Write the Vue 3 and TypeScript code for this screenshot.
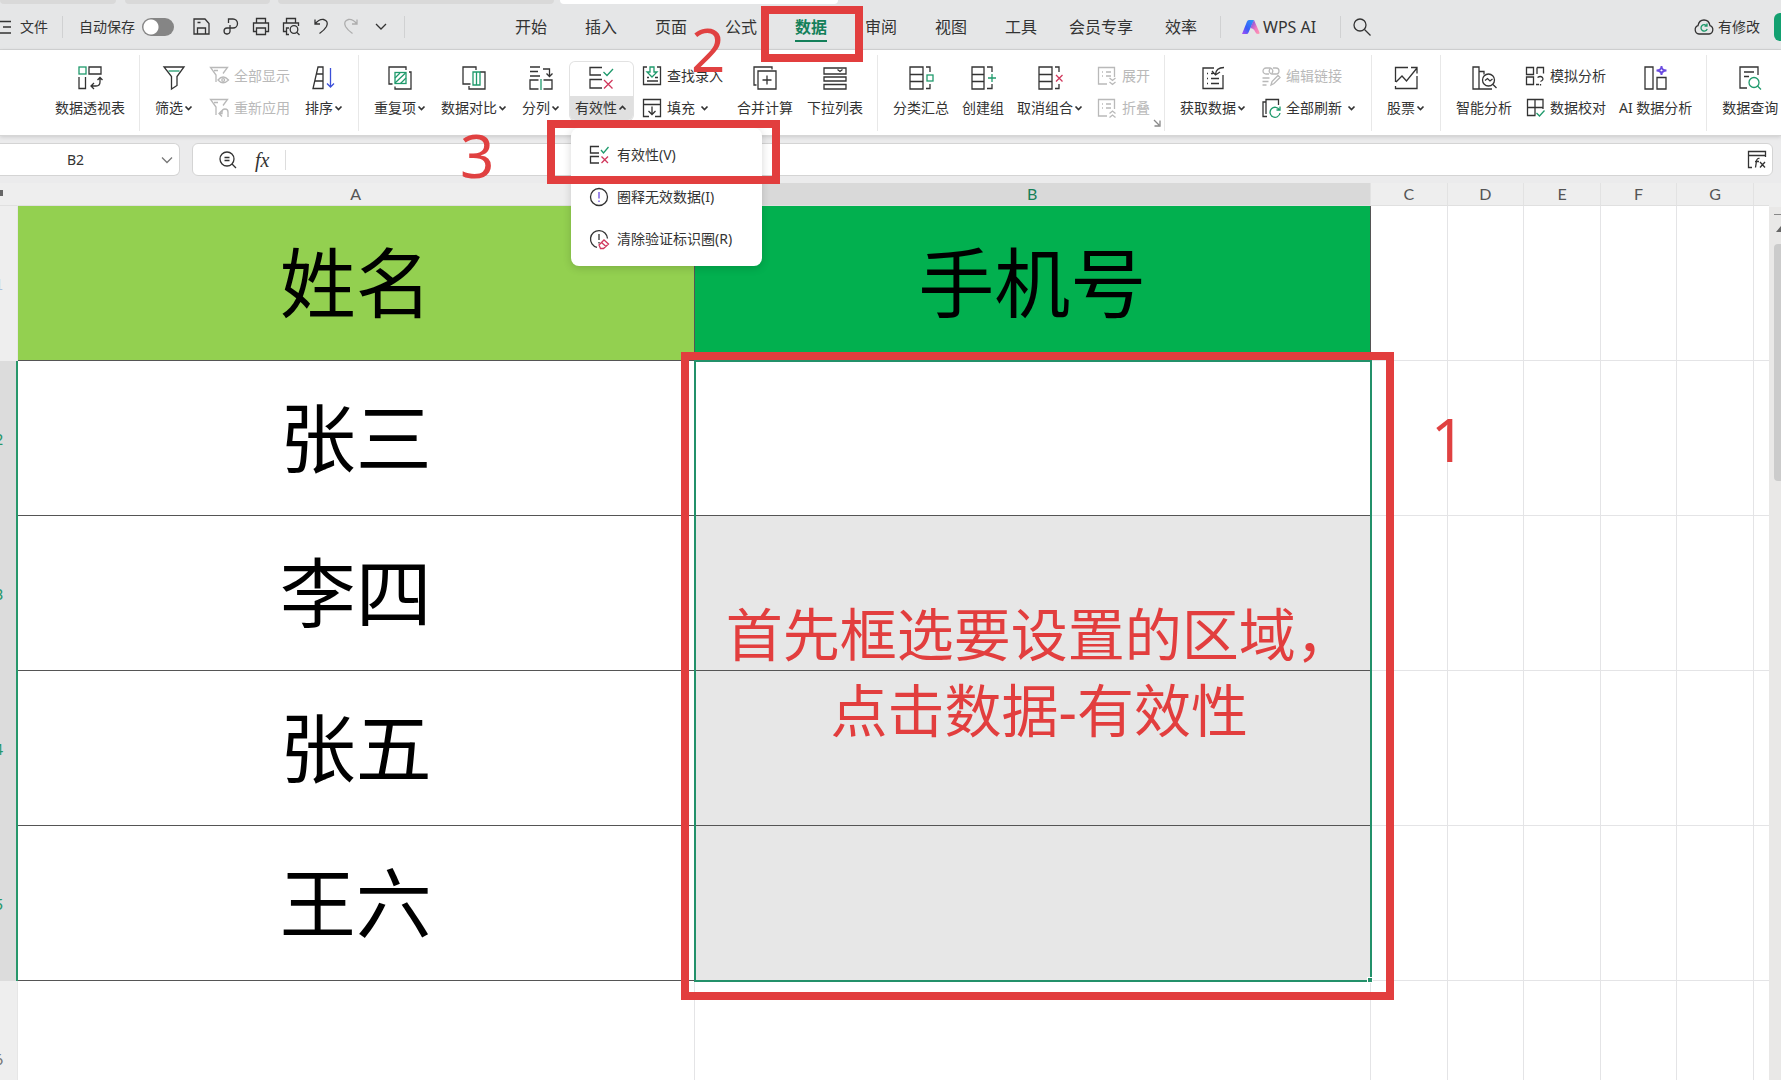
<script setup lang="ts">
import { ref } from 'vue'

type Item = { label: string; icon: string; caret?: boolean; disabled?: boolean; open?: boolean }
type Entry = Item | Item[]
type Group = { id: string; entries: Entry[]; launcher?: boolean }

const G = '#1f9a6c'
const R = '#d0375c'
const V = '#6a4be0'

const icons: Record<string, string> = {
  pivot: `<rect x="1" y="1" width="7" height="7" stroke="${G}"/><path d="M11 1h12v7H11zM1 11v11.500h6.500V11M22 12v4q0 4-4 4h-5M19.500 14l2.500-2.500 2.500 2.500M16 17l-3 3 3 3"/>`,
  filter: `<path d="M2 1h20l-7 9.500v9L9.500 23V10.500z"/><path d="M6.500 5h11" stroke="${G}"/>`,
  showall: `<path d="M7 16V9L1.500 1.500h17L14 7.500M5 4.500h4"/><path d="M9 14q5-6 10.500 0-5.500 5.500-10.500 0z"/><circle cx="14.200" cy="14" r="1.400"/>`,
  reapply: `<path d="M7 17V9L1.500 1.500h17L14 7.500M5 4.500h4M13 12.500l-3 3 3 3M10 15.500h3V14q0-3 3-3t3 3v5"/>`,
  sort: `<path d="M6 1h5v21.500H1zM4.500 8H11M3 15h8"/><path d="M18.500 2v19M15 17.500l3.500 3.500 3.500-3.500" stroke="#3b4fd8"/>`,
  dup: `<path d="M4.500 18H1V1h17v3M21 6h2v17H7v-2.500"/><rect x="7" y="6.500" width="11" height="11" stroke="${G}"/><path d="M7 12l5-5M7 17L17.500 7M12.500 17.500L18 12" stroke="${G}"/>`,
  compare: `<path d="M8.500 18H1V1h13v3M18 6h5v17H7v-3"/><path d="M11 6h7v13h-7zM14.500 6v13" stroke="${G}"/>`,
  split: `<path d="M1 1h10M1 5.500h8M1 10h10M14 3h6.500v7M17.500 7.500l3 3 3-3M9.500 14H1v9h8.500M14.500 14H23v9h-8.500"/><path d="M12 13v11" stroke="${G}"/>`,
  valid: `<path d="M13 1.500H1V9h11M13 13.500H1V22h12"/><path d="M14.500 6l3.500 3.500L24 3" stroke="${G}"/><path d="M15 14l8.500 8.500M23.500 14L15 22.500" stroke="${R}"/>`,
  lookup: `<path d="M5 1H1.500v17.500h17V1H15M5 11.500h2M5 15h11M13 11.500h3"/><path d="M8 1h4v5h3l-5 5-5-5h3z" stroke="${G}"/>`,
  fill: `<path d="M7 18.500H1.500V6.500h17v12H13M1.500 6.500v-5h17v5M10 8.500v8M6.500 13l3.500 3.500 3.500-3.500"/>`,
  merge: `<path d="M3.500 19H1V1h18v2.500"/><path d="M5 5h18v18H5zM14 9.500v9M9.500 14h9"/>`,
  list: `<path d="M1 2h22v6H1zM1 11h22v4H1zM1 18.500h22v4.500H1zM14.500 3.500l2.500 2 2.500-2"/>`,
  subtotal: `<path d="M1 1h13v22H1zM1 8.500h13M1 15.500h13M17 1h4v5M21 18v4.500h-4"/><rect x="18" y="9" width="6" height="6" stroke="${G}"/>`,
  group: `<path d="M1 1h12v22H1zM1 8.500h12M1 15.500h12M16 1h5v5M21 18v4.500h-5"/><path d="M17 12h8M21 8v8" stroke="${G}"/>`,
  ungroup: `<path d="M1 1h13v22H1zM1 8.500h13M1 15.500h13M17 1h4v5M21 18v4.500h-4"/><path d="M18 9l6.500 6.500M24.500 9L18 15.500" stroke="${R}"/>`,
  expand: `<path d="M10 18H1.500V1.500h16V11M5 6h1M9 6h5M5 10h1M9 10h5M12.500 12l3 2.500 3-2.500M12.500 16l3 2.500 3-2.500"/>`,
  collapse: `<path d="M10 18H1.500V1.500h16V11M5 6h1M9 6h5M5 10h1M9 10h5M12.500 15.500l3-2.500 3 2.500M12.500 19.500l3-2.500 3 2.500"/>`,
  fetch: `<path d="M13 2H2v20.500h20V9M6 7.500h1M6 12.500h1M6 17.500h1M10 12.500h8M10 17.500h8M10 7.500h2M23 1.500q-8 0-8.500 7M11 5l3.500 4 4.500-3"/>`,
  link: `<path d="M8 8H5a3 3 0 0 1 0-6h4a3 3 0 0 1 2 5M12 2h3a3 3 0 0 1 0 6h-4a3 3 0 0 1-2-5M1.500 12h7M1.500 15.500h6M1.500 19h4M10 19l1-3.500 6-6 2 2-6 6z"/>`,
  refresh: `<path d="M5 16V1.500h12.500V7M5 4H2v14.500h4"/><path d="M18.500 12a5 5 0 1 0 .500 3M19 8.500V12h-3.500" stroke="${G}"/>`,
  stock: `<path d="M14 1.500H1.500V16M23 10v12.500H1.500V20M2 16l6-6 4.500 5L23 2M17 1.500h6v6"/>`,
  smart: `<path d="M1 1h6v22H1zM7 5.500h5v3M7 23h13"/><circle cx="16.500" cy="14" r="6"/><path d="M21 18.500l3.500 3.500M13 14.500l2.500-2 2.500 2.500 2.500-2"/>`,
  sim: `<path d="M1.500 1.500h7v7h-7zM1.500 11h7v7.500h-7zM12 1.500h6.500v6M12 1.500V8M11 18.500h3M12.500 11.500q3-2 5 0 1.500 2.500-2 4M15.500 18v1.500"/>`,
  check: `<path d="M10.500 17.500h-8v-16h15.500V11M2.500 9.500H18M10 1.500v16"/><path d="M11.500 15l3 3 5-5.500" stroke="${G}"/>`,
  ai: `<path d="M2 1h8v22H2zM14 11.500h9V23h-9z"/><path d="M18.500 0q0 4.500 5 4.500-5 0-5 4.500 0-4.500-5-4.500 5 0 5-4.500z" stroke="${V}" stroke-width="1.800"/>`,
  query: `<path d="M9 22H2V1h18v8M6 6h10M6 10.500h5"/><circle cx="16" cy="16.500" r="5" stroke="${G}"/><path d="M19.500 20l3.500 3.500" stroke="${G}"/>`,
  warn: `<circle cx="10" cy="10" r="8.500"/><path d="M10 5v6.500M10 13.500v1.500" stroke="${V}"/>`,
  erase: `<path d="M8 18.300A8.500 8.500 0 1 1 18.500 9.500M10 5v6M10 13v1.500"/><path d="M10 16l5-5 4.500 4-5 4.500h-3zM12.500 13.500l4.500 4" stroke="${R}"/>`,
  optValid: `<path d="M10 1.500H1.500V8H10M10 11.500H1.500V18H10"/><path d="M12 5l2.500 3L19.500 2" stroke="${G}"/><path d="M12.500 11.500l6.500 6.500M19 11.500L12.500 18" stroke="${R}"/>`,
  save: `<path d="M2 2h11l4 4.500V17H2zM5.500 17v-6h8v6M5.500 5.500h3"/>`,
  share: `<path d="M6.500 6V2H11a4.300 4.300 0 0 1 0 9H5a3 3 0 1 0 3 3.500V8"/>`,
  print: `<path d="M4.500 6V1.500h9V6M4.500 14.500h-3V6h15v8.500h-3M4.500 11h9v6.500h-9z"/>`,
  preview: `<path d="M4.500 6V1.500h9V6M4.500 14.500h-3V6h15v3M7 17.500H4.500V11H7"/><circle cx="12" cy="12.500" r="3.800"/><path d="M15 15.500l2.500 2.500"/>`,
  undo: `<path d="M3 2.500V7h5M3 7q4-5 8.500-4.500Q17 4 14.500 9.500 12.500 13 7.500 16.500"/>`,
  redo: `<path d="M15 2.500V7h-5M15 7q-4-5-8.500-4.500Q1 4 3.500 9.500 5.500 13 10.500 16.500"/>`,
  more: `<path d="M4 7l5 5 5-5"/>`,
}

const groups: Group[] = [
  { id: 'pivot', entries: [{ label: '数据透视表', icon: 'pivot' }] },
  {
    id: 'filter',
    entries: [
      { label: '筛选', icon: 'filter', caret: true },
      [
        { label: '全部显示', icon: 'showall', disabled: true },
        { label: '重新应用', icon: 'reapply', disabled: true },
      ],
      { label: '排序', icon: 'sort', caret: true },
    ],
  },
  {
    id: 'tools',
    entries: [
      { label: '重复项', icon: 'dup', caret: true },
      { label: '数据对比', icon: 'compare', caret: true },
      { label: '分列', icon: 'split', caret: true },
      { label: '有效性', icon: 'valid', caret: true, open: true },
      [
        { label: '查找录入', icon: 'lookup' },
        { label: '填充', icon: 'fill', caret: true },
      ],
      { label: '合并计算', icon: 'merge' },
      { label: '下拉列表', icon: 'list' },
    ],
  },
  {
    id: 'outline',
    launcher: true,
    entries: [
      { label: '分类汇总', icon: 'subtotal' },
      { label: '创建组', icon: 'group' },
      { label: '取消组合', icon: 'ungroup', caret: true },
      [
        { label: '展开', icon: 'expand', disabled: true },
        { label: '折叠', icon: 'collapse', disabled: true },
      ],
    ],
  },
  {
    id: 'source',
    entries: [
      { label: '获取数据', icon: 'fetch', caret: true },
      [
        { label: '编辑链接', icon: 'link', disabled: true },
        { label: '全部刷新', icon: 'refresh', caret: true },
      ],
    ],
  },
  { id: 'stock', entries: [{ label: '股票', icon: 'stock', caret: true }] },
  {
    id: 'analysis',
    entries: [
      { label: '智能分析', icon: 'smart' },
      [
        { label: '模拟分析', icon: 'sim' },
        { label: '数据校对', icon: 'check' },
      ],
      { label: 'AI 数据分析', icon: 'ai' },
    ],
  },
  { id: 'query', entries: [{ label: '数据查询', icon: 'query' }] },
]

const quick = ['save', 'share', 'print', 'preview', 'undo', 'redo', 'more']
const quickNames: Record<string, string> = {
  save: '保存', share: '输出', print: '打印', preview: '打印预览', undo: '撤销', redo: '恢复', more: '更多',
}
const tabs = ['开始', '插入', '页面', '公式', '数据', '审阅', '视图', '工具', '会员专享', '效率']
const active = ref('数据')
const autosave = ref(false)
const cellName = ref('B2')
const formula = ref('')

const menu = [
  { label: '有效性(V)', icon: 'optValid' },
  { label: '圈释无效数据(I)', icon: 'warn' },
  { label: '清除验证标识圈(R)', icon: 'erase' },
]

const columns = ['A', 'B', 'C', 'D', 'E', 'F', 'G', '']
const rows = [
  { n: 1, a: '姓名', b: '手机号' },
  { n: 2, a: '张三', b: '' },
  { n: 3, a: '李四', b: '' },
  { n: 4, a: '张五', b: '' },
  { n: 5, a: '王六', b: '' },
  { n: 6, a: '', b: '' },
]
</script>

<template>
  <div class="app">
    <div class="doc-tabs">
      <i class="doc first"></i><i class="doc second"></i><i class="doc third"></i><i class="doc current"></i>
    </div>

    <header class="menubar">
      <div class="quick">
        <button class="file">
          <svg class="burger" viewBox="0 0 14 18"><path d="M0 3.500h11M3 9h8M0 15h11" /></svg>
          文件
        </button>
        <i class="rule"></i>
        <label class="auto">自动保存<input v-model="autosave" type="checkbox" /></label>
        <div class="quick-icons">
          <button v-for="q in quick" :key="q" :class="{ faded: q === 'redo' }" :aria-label="quickNames[q]">
            <svg viewBox="0 0 18 19" v-html="icons[q]"></svg>
          </button>
        </div>
        <i class="rule"></i>
      </div>
      <nav class="tabs">
        <button v-for="t in tabs" :key="t" class="tab" :class="{ active: t === active }" @click="active = t">
          <span>{{ t }}</span>
          <template v-if="t === '数据'">
            <i class="mark tab-mark"></i>
            <b class="digit two">2</b>
          </template>
        </button>
      </nav>
      <i class="rule"></i>
      <button class="wps">
        <svg viewBox="0 0 20 16">
          <defs>
            <linearGradient id="blue" x1="0" y1="1" x2="1" y2="0"><stop offset="0" stop-color="#b04df5" /><stop offset=".4" stop-color="#3a5bf8" /><stop offset="1" stop-color="#2a9cf8" /></linearGradient>
            <linearGradient id="pink" x1="0" y1="0" x2="1" y2="1"><stop offset="0" stop-color="#5a48e8" /><stop offset=".6" stop-color="#f07ac0" /><stop offset="1" stop-color="#ff9ab0" /></linearGradient>
          </defs>
          <path d="M6 2.500Q6.500 1 8 1h5L7.500 13.500Q7 15 5.500 15H1z" fill="url(#blue)" />
          <path d="M10.500 6L13 1l5.500 12.500Q19 15 17 15q-2 0-3-2.500-1-3-4.500-3.500z" fill="url(#pink)" />
        </svg>
        WPS AI
      </button>
      <i class="rule"></i>
      <button class="search" aria-label="搜索">
        <svg viewBox="0 0 18 18"><circle cx="7" cy="7" r="6" /><path d="M11.500 11.500l6 6" /></svg>
      </button>
      <button class="cloud">
        <svg viewBox="0 0 20 18">
          <path d="M5 16a4.300 4.300 0 0 1-1-8.300Q5 2 10 2t6 5.700A4.300 4.300 0 0 1 15 16z" />
          <path d="M12.800 8a3.200 3.200 0 1 0 .400 3M13 5.500V8h-2.500" stroke="#1f9a6c" />
        </svg>
        有修改
      </button>
      <button class="share-btn" aria-label="分享"></button>
    </header>

    <section class="ribbon">
      <div v-for="g in groups" :key="g.id" class="group" :class="g.id">
        <template v-for="(e, i) in g.entries" :key="i">
          <div v-if="Array.isArray(e)" class="stack">
            <button v-for="s in e" :key="s.label" class="small" :disabled="s.disabled">
              <svg class="ico" viewBox="0 0 20 20" v-html="icons[s.icon]"></svg>
              <span>{{ s.label }}</span>
              <svg v-if="s.caret" class="caret" viewBox="0 0 11 8"><path d="M2.500 2.500l3 3 3-3" /></svg>
            </button>
          </div>
          <div v-else class="slot">
            <button class="big" :class="{ open: e.open }">
              <span class="top"><svg viewBox="0 0 25 25" v-html="icons[e.icon]"></svg></span>
              <span class="bottom">
                {{ e.label }}
                <svg v-if="e.caret" class="caret" viewBox="0 0 11 8">
                  <path :d="e.open ? 'M2.500 5.500l3-3 3 3' : 'M2.500 2.500l3 3 3-3'" />
                </svg>
              </span>
            </button>
            <div v-if="e.open" class="dropdown">
              <button v-for="m in menu" :key="m.label" class="option">
                <svg viewBox="0 0 20 20" v-html="icons[m.icon]"></svg>{{ m.label }}
              </button>
              <i class="mark menu-mark"></i>
              <b class="digit three">3</b>
            </div>
          </div>
        </template>
        <svg v-if="g.launcher" class="launcher" viewBox="0 0 8 8"><path d="M1 1l5 5M7 1.500V7H1.500" /></svg>
      </div>
    </section>

    <section class="formula">
      <div class="name-box">
        <input v-model="cellName" aria-label="名称框" />
        <svg viewBox="0 0 12 8"><path d="M1 1.500l5 5 5-5" /></svg>
      </div>
      <div class="formula-box">
        <svg class="lens" viewBox="0 0 18 18"><circle cx="8" cy="8" r="7" /><path d="M13 13l4 4M5.500 6.500h5M5.500 9.500h5" /></svg>
        <span class="fx">fx</span>
        <input v-model="formula" aria-label="编辑栏" />
        <svg class="fx-panel" viewBox="0 0 20 19"><path d="M5 17.500H1.500V1.500h17V7M1.500 5.500h17M12.500 8.500q-2.500-.500-3 2.500l-1 6.500M8 11.500h4M13 12l5 5.500M18 12l-5 5.500" /></svg>
      </div>
    </section>

    <main class="sheet">
      <table>
        <colgroup>
          <col class="c-head" /><col /><col />
          <col class="c-narrow" /><col class="c-narrow" /><col class="c-narrow" /><col class="c-narrow" /><col class="c-narrow" />
          <col class="c-rest" />
        </colgroup>
        <thead>
          <tr>
            <th class="corner"><i></i></th>
            <th v-for="c in columns" :key="c" scope="col" :class="{ on: c === 'B', wide: c === 'A' }">{{ c }}</th>
          </tr>
        </thead>
        <tbody>
          <tr v-for="r in rows" :key="r.n" :class="['r' + r.n, { data: r.n > 1 && r.n < 6 }]">
            <th scope="row">{{ r.n }}</th>
            <td class="a">{{ r.a }}</td>
            <td class="b">
              {{ r.b }}
              <template v-if="r.n === 2">
                <i class="selection"></i>
                <i class="mark area-mark"></i>
                <p class="tip">首先框选要设置的区域，<br />点击数据-有效性</p>
                <b class="digit one">1</b>
              </template>
            </td>
            <td v-for="k in 6" :key="k"></td>
          </tr>
        </tbody>
      </table>
      <div class="scroll">
        <i class="split-handle"></i>
        <svg viewBox="0 0 10 6"><path d="M5 0l5 6H0z" /></svg>
        <i class="thumb"></i>
      </div>
    </main>
  </div>
</template>

<style>
body {
  margin: 0;
  overflow: hidden;
}
</style>

<style scoped>
.app {
  display: flex;
  flex-direction: column;
  height: 100vh;
  overflow: hidden;
  background: #ececec;
  color: #333;
  font: 14px/20px "Noto Sans", "Noto Sans CJK SC", sans-serif;
}
button {
  border: 0;
  padding: 0;
  background: none;
  color: inherit;
  font: inherit;
  white-space: nowrap;
}
input {
  border: 0;
  padding: 0;
  outline: 0;
  background: none;
  color: inherit;
  font: inherit;
  min-width: 0;
}
svg {
  display: block;
  flex: none;
  overflow: visible;
  fill: none;
  stroke: currentColor;
  stroke-width: 1.3;
}
.doc-tabs {
  display: flex;
  flex: none;
  height: 4px;
  background: #e5e6e7;
}
.doc {
  background: #d9d9d9;
  border-radius: 0 0 4px 4px;
}
.first { width: 116px; }
.second { width: 145px; margin-left: 9px; }
.third { width: 276px; margin-left: 8px; }
.current { width: 278px; margin-left: 6px; background: #fff; }

.menubar {
  display: flex;
  flex: none;
  align-items: center;
  height: 45px;
  background: #e5e6e7;
  border-bottom: 1px solid #d4d5d6;
}
.quick {
  display: flex;
  align-items: center;
  flex: 0 0 496px;
}
.file {
  display: flex;
  align-items: center;
  gap: 6px;
  margin-right: 14px;
}
.burger { width: 14px; height: 18px; }
.rule {
  flex: none;
  width: 1px;
  height: 22px;
  background: #d0d1d2;
}
.auto {
  display: flex;
  align-items: center;
  gap: 7px;
  margin-left: 16px;
}
.auto input {
  appearance: none;
  width: 32px;
  height: 18px;
  margin: 0;
  border-radius: 9px;
  background: radial-gradient(circle at 9px 9px, #fff 7px, transparent 8px), #858585;
}
.quick-icons {
  display: flex;
  gap: 12px;
  margin: 0 14px 0 18px;
}
.quick-icons svg { width: 18px; height: 19px; }
.faded { color: #adadad; }
.tabs { display: flex; align-self: stretch; }
.tab {
  position: relative;
  min-width: 70px;
  padding: 0 13px;
  font-size: 16px;
  line-height: 24px;
}
.tab.active span {
  display: inline-block;
  margin-top: 3px;
  padding-bottom: 3px;
  background: linear-gradient(#14805a, #14805a) bottom / 100% 2px no-repeat;
  color: #14805a;
  font-weight: 700;
}
.tabs + .rule { margin-left: 4px; }
.wps {
  display: flex;
  align-items: center;
  gap: 2px;
  margin: 0 24px 0 20px;
  font-size: 16px;
}
.wps svg { width: 20px; height: 16px; stroke: none; }
.search { margin-left: 12px; }
.search svg { width: 18px; height: 18px; }
.cloud {
  display: flex;
  align-items: center;
  gap: 4px;
  margin-left: auto;
}
.cloud svg { width: 20px; height: 18px; }
.share-btn {
  width: 7px;
  height: 28px;
  margin-left: 14px;
  border-radius: 6px 0 0 6px;
  background: #12a070;
}

.mark {
  position: absolute;
  z-index: 20;
  box-sizing: border-box;
  border: 8px solid #e23e3e;
  pointer-events: none;
}
.digit {
  position: absolute;
  z-index: 20;
  color: #e04141;
  font-size: 60px;
  line-height: 60px;
  font-weight: 400;
}
.tab-mark {
  top: 2px;
  left: -15px;
  right: -17px;
  height: 56px;
}
.two { top: 15px; left: -85px; }
.tabs { position: relative; z-index: 3; }

.ribbon {
  position: relative;
  z-index: 2;
  display: flex;
  flex: none;
  align-items: center;
  box-sizing: border-box;
  height: 86px;
  padding-left: 40px;
  background: #fff;
  border-bottom: 1px solid #d6d6d6;
  box-shadow: 0 1px 4px rgba(0, 0, 0, 0.14);
}
.group {
  position: relative;
  display: flex;
  flex: none;
  gap: 14px;
  box-sizing: border-box;
  height: 76px;
  padding: 7px 14px 0 15px;
  border-right: 1px solid #e8e8e8;
}
.group:last-child { border: 0; }
.filter { gap: 15px; }
.outline, .analysis { gap: 13px; }
.slot { position: relative; }
.big {
  display: block;
  margin: 0 -5px;
  border-radius: 5px;
}
.big .top {
  display: flex;
  justify-content: center;
  box-sizing: border-box;
  height: 34px;
  padding-top: 4px;
}
.big .top svg { width: 25px; height: 25px; }
.big .bottom {
  display: flex;
  align-items: center;
  height: 24px;
  padding: 0 5px;
}
.caret {
  width: 11px;
  height: 8px;
  stroke-width: 1.7;
}
.open { box-shadow: 0 0 0 1px #e2e2e2; }
.open .bottom {
  background: #e0e0e0;
  border-radius: 0 0 5px 5px;
}
.stack {
  display: flex;
  flex-direction: column;
  gap: 4px;
}
.small {
  display: flex;
  align-items: center;
  height: 28px;
}
.small:disabled { color: #b9b9b9; }
.ico {
  width: 20px;
  height: 20px;
  margin-right: 5px;
}
.small .caret { margin-left: 4px; }
.launcher {
  position: absolute;
  right: 3px;
  bottom: 4px;
  width: 8px;
  height: 8px;
  color: #888;
}
.dropdown {
  position: absolute;
  z-index: 10;
  top: 66px;
  left: -4px;
  width: 191px;
  box-sizing: border-box;
  padding: 6px 0;
  background: #fff;
  border-radius: 8px;
  box-shadow: 0 2px 8px rgba(0, 0, 0, 0.16);
}
.option {
  display: flex;
  align-items: center;
  gap: 8px;
  width: 100%;
  height: 42px;
  padding-left: 18px;
}
.option svg { width: 20px; height: 20px; }
.menu-mark {
  top: -8px;
  left: -24px;
  right: -18px;
  height: 64px;
}
.three { top: -3px; left: -111px; }

.formula {
  display: flex;
  flex: none;
  align-items: center;
  gap: 12px;
  height: 47px;
  padding-right: 8px;
  background: #ebebec;
}
.name-box, .formula-box {
  display: flex;
  align-items: center;
  box-sizing: border-box;
  height: 33px;
  background: #fff;
  border: 1px solid #d4d4d4;
  border-radius: 6px;
}
.name-box {
  width: 180px;
  border-left: 0;
  border-radius: 0 6px 6px 0;
}
.name-box input {
  width: 151px;
  margin-right: 10px;
  text-align: center;
}
.name-box svg {
  width: 12px;
  height: 8px;
  color: #777;
}
.formula-box {
  flex: 1;
  padding: 0 5px 0 26px;
}
.lens { width: 18px; height: 18px; }
.fx {
  margin: 0 16px 0 18px;
  font: italic 20px/20px "Liberation Serif", serif;
}
.formula-box input {
  flex: 1;
  height: 20px;
  border-left: 1px solid #ddd;
}
.fx-panel { width: 20px; height: 19px; }

.sheet {
  display: flex;
  flex: 1;
  align-items: flex-start;
  min-height: 0;
  background: #eee;
}
table {
  flex: 1;
  width: 0;
  table-layout: fixed;
  border-collapse: separate;
  border-spacing: 0;
}
.c-head { width: 18px; }
.c-narrow { width: 4.33%; }
.c-rest { width: 15px; }
th, td { padding: 0; font-weight: 400; }
thead th {
  height: 22px;
  border-bottom: 1px solid #e0e0e0;
  border-right: 1px solid #e2e2e2;
  background: #eee;
  color: #555;
  font: 16px/22px Lato, sans-serif;
}
thead th.wide, thead th.corner { border-right-color: transparent; }
thead th:last-child { border-right: 0; }
thead .on { background: #d9d9d9; color: #178058; }
.corner i {
  display: block;
  width: 3px;
  height: 6px;
  margin-top: -2px;
  background: #666;
}
tbody th {
  box-sizing: border-box;
  height: 155px;
  overflow: hidden;
  background: #eee;
  border-right: 1px solid #e6e6e6;
  color: #777;
  font: 16px/20px Lato, sans-serif;
  text-align: left;
  text-indent: -6px;
}
.r1 th { color: #a9bfdc; }
.data th {
  background: #dcdcdc;
  border-right: 2px solid #27976b;
  color: #27976b;
}
td {
  box-sizing: border-box;
  height: 155px;
  background: #fff;
  border-right: 1px solid #e4e4e6;
  border-bottom: 1px solid #e4e4e6;
}
td:last-child { border-right: 0; }
.a, .b {
  color: #000;
  font-size: 76px;
  line-height: 100px;
  text-align: center;
}
.r1 td.a { background: #93d050; }
.r1 td.b { background: #02b04f; }
.r1 .a, .r1 .b, .data .a, .data .b { border-color: #555; }
.data .a { border-right-color: #fff; }
.b { position: relative; }
.r3 .b, .r4 .b, .r5 .b { background: #e7e7e7; }
.r2 .b { z-index: 1; }
.selection {
  position: absolute;
  top: -1px;
  left: -1px;
  right: -2px;
  height: calc(400% + 6px);
  box-sizing: border-box;
  border: 2px solid #23916a;
}
.selection::after {
  content: "";
  position: absolute;
  right: -3px;
  bottom: -3px;
  width: 4px;
  height: 4px;
  background: #23916a;
  border: 1px solid #fff;
}
.area-mark {
  top: -9px;
  left: -14px;
  right: -24px;
  height: calc(400% + 32px);
}
.tip {
  position: absolute;
  top: 235px;
  left: 0;
  right: -14px;
  margin: 0;
  color: #e23e3e;
  font-size: 57px;
  line-height: 76px;
  white-space: nowrap;
}
.one { top: 48px; left: calc(100% + 61px); }
.scroll {
  display: flex;
  flex-direction: column;
  align-self: stretch;
  width: 12px;
  margin-top: 24px;
  background: #e9e8e7;
  color: #666;
}
.split-handle {
  height: 1px;
  margin: 7px 0 11px 5px;
  background: #888;
}
.scroll svg {
  width: 10px;
  height: 6px;
  margin-left: 7px;
  fill: currentColor;
  stroke: none;
}
.thumb {
  height: 237px;
  margin: 12px 0 0 5px;
  border-radius: 4px 0 0 4px;
  background: #cbcbcb;
}
</style>
